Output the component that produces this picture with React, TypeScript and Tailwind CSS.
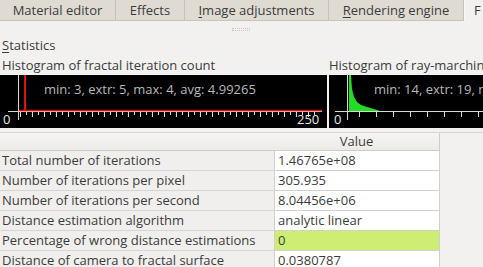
import { Fragment } from 'react'

const tabs = [
  { label: 'Material editor', mn: '', w: 'w-[116px]' },
  { label: 'Effects', mn: '', w: 'w-[69px]' },
  { label: 'Image adjustments', mn: 'I', w: 'w-[144px]' },
  { label: 'Rendering engine', mn: 'R', w: 'w-[135px]' },
]

const rows = [
  { name: 'Total number of iterations', value: '1.46765e+08' },
  { name: 'Number of iterations per pixel', value: '305.935' },
  { name: 'Number of iterations per second', value: '8.04456e+06' },
  { name: 'Distance estimation algorithm', value: 'analytic linear' },
  { name: 'Percentage of wrong distance estimations', value: '0', warn: true },
  { name: 'Distance of camera to fractal surface', value: '0.0380787' },
]

const Mnemonic = ({ text, mn }: { text: string; mn: string }) =>
  mn ? (
    <>
      <span className="underline underline-offset-2">{text[0]}</span>
      {text.slice(1)}
    </>
  ) : (
    <>{text}</>
  )

const FractalHistogram = () => {
  const ticks = []
  for (let x = 20; x <= 318; x += 6) ticks.push(x)
  return (
    <svg width="327" height="53" className="block bg-black">
      <line x1="18.5" y1="0" x2="18.5" y2="45" stroke="#d8d8d8" />
      <line x1="8" y1="36.5" x2="322" y2="36.5" stroke="#d8d8d8" />
      {ticks.map((x, i) => (
        <line key={x} x1={x + 0.5} y1="37" x2={x + 0.5} y2={i % 2 === 0 ? 42 : 40} stroke="#d8d8d8" />
      ))}
      <line x1="19" y1="35.5" x2="322" y2="35.5" stroke="#e01010" strokeWidth="1.5" />
      <rect x="24" y="0" width="2" height="36" fill="#e01010" />
      <text x="44" y="19" fill="#b8b8b8" fontSize="13" fontFamily="Open Sans, sans-serif">
        min: 3, extr: 5, max: 4, avg: 4.99265
      </text>
      <text x="3" y="49" fill="#e8e8e8" fontSize="13" fontFamily="Open Sans, sans-serif">0</text>
      <text x="297" y="49" fill="#e8e8e8" fontSize="13" fontFamily="Open Sans, sans-serif">250</text>
    </svg>
  )
}

const RayHistogram = () => {
  const ticks = []
  for (let x = 30; x <= 160; x += 17) ticks.push(x)
  return (
    <svg width="160" height="53" className="block bg-black">
      <line x1="18.5" y1="0" x2="18.5" y2="45" stroke="#d8d8d8" />
      <line x1="6" y1="36.5" x2="160" y2="36.5" stroke="#d8d8d8" />
      {ticks.map((x) => (
        <line key={x} x1={x + 0.5} y1="37" x2={x + 0.5} y2="42" stroke="#d8d8d8" />
      ))}
      <path d="M20 36 L20 0 L22 0 L23 14 L25 22 L28 27 L32 30 L38 32 L45 34 L50 35.5 L50 36 Z" fill="#22dd22" />
      <text x="45" y="19" fill="#b8b8b8" fontSize="13" fontFamily="Open Sans, sans-serif">
        min: 14, extr: 19, max: 40
      </text>
      <text x="5" y="49" fill="#e8e8e8" fontSize="13" fontFamily="Open Sans, sans-serif">0</text>
    </svg>
  )
}

export default function App() {
  return (
    <div className="w-[483px] h-[267px] overflow-hidden bg-[#f2f1f0] text-[#3c3c3c] text-[13px] font-['Open_Sans','DejaVu_Sans',sans-serif]">
      {/* Tabs */}
      <div className="flex h-[21px] border-b border-[#c9c5bd] bg-[#dfdbd3]">
        {tabs.map((t) => (
          <div
            key={t.label}
            className={`${t.w} shrink-0 flex items-center justify-center border-r border-[#c6c2ba] leading-none`}
          >
            <Mnemonic text={t.label} mn={t.mn} />
          </div>
        ))}
        <div className="flex-1 -mb-px bg-[#f2f1f0] border-l border-[#f8f8f7] pl-[9px] flex items-center leading-none">
          F
        </div>
      </div>

      {/* splitter handle */}
      <div className="h-[16px] flex justify-center items-center">
        <div className="w-[18px] h-[3px] ml-[-2px] border-y border-dotted border-[#c8c4bd]" />
      </div>

      <div className="h-[16px] pl-[2px] flex items-center leading-none">
        <Mnemonic text="Statistics" mn="S" />
      </div>

      {/* Histograms */}
      <div className="flex gap-[2px] mt-[4px]">
        <div className="w-[327px] shrink-0">
          <div className="h-[16px] pl-[2px] leading-none flex items-center">Histogram of fractal iteration count</div>
          <div className="mt-[2px]">
            <FractalHistogram />
          </div>
        </div>
        <div className="flex-1 overflow-hidden">
          <div className="h-[16px] leading-none flex items-center whitespace-nowrap">Histogram of ray-marching step count</div>
          <div className="mt-[2px]">
            <RayHistogram />
          </div>
        </div>
      </div>

      {/* Table */}
      <div className="mt-[4px] border-t border-[#dad6d0]">
        <div className="grid grid-cols-[274px_166px] w-[440px]">
          <div className="h-[18px] bg-gradient-to-b from-[#f6f5f4] to-[#ecebe8] border-b border-[#d0ccc5]" />
          <div className="h-[18px] bg-gradient-to-b from-[#f6f5f4] to-[#ecebe8] border-b border-[#d0ccc5] border-r border-[#d0ccc5] flex items-center justify-center leading-none">
            Value
          </div>
          {rows.map((r) => (
            <Fragment key={r.name}>
              <div className="h-[20px] bg-[#f0efed] border-b border-[#d8d5d0] pl-[2px] flex items-center leading-none whitespace-nowrap overflow-hidden">
                {r.name}
              </div>
              <div
                className={`h-[20px] border-b border-l border-r border-[#d0d0d0] pl-[3px] flex items-center leading-none ${
                  r.warn ? 'bg-[#cdee72]' : 'bg-white'
                }`}
              >
                {r.value}
              </div>
            </Fragment>
          ))}
        </div>
      </div>
    </div>
  )
}
